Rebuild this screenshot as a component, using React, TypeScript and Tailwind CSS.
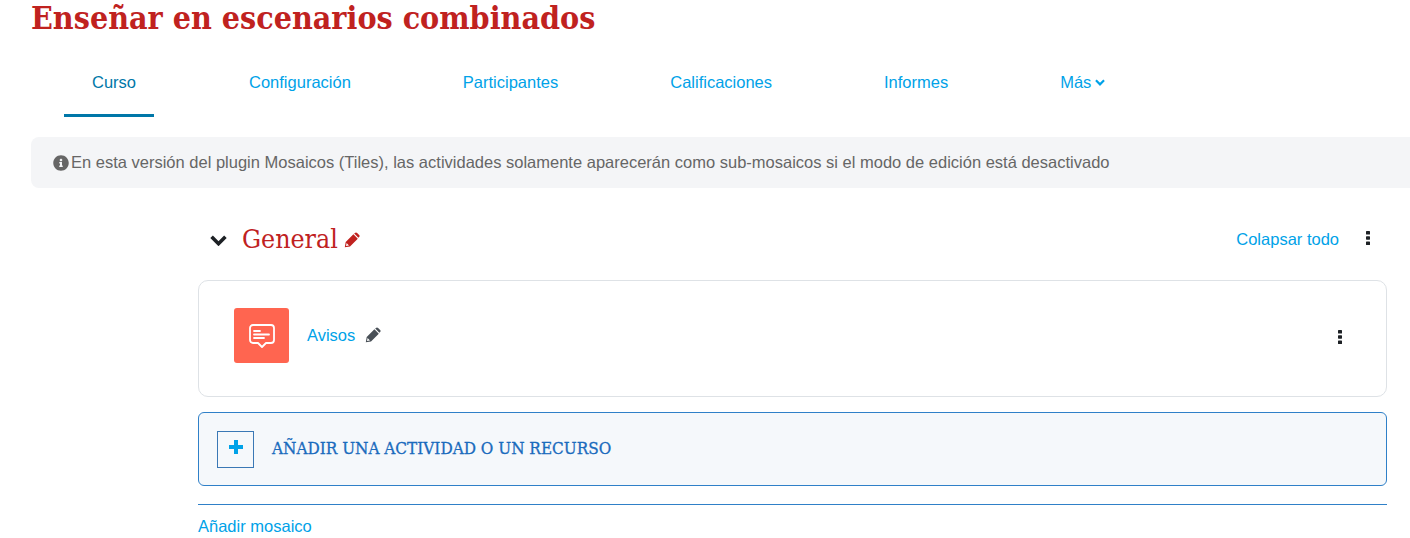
import React from 'react';
import { FaInfoCircle } from 'react-icons/fa';

const slab = "font-['DejaVu_Serif_Condensed','DejaVu_Serif',serif]";

const tabs = ['Configuración', 'Participantes', 'Calificaciones', 'Informes'];

// icono de foro/avisos
const ForumIcon = () => (
  <svg width="28" height="26" viewBox="0 0 28 26" fill="none" stroke="white" strokeWidth="1.8" strokeLinecap="round" strokeLinejoin="round">
    <path d="M5 2h18a3 3 0 0 1 3 3v12a3 3 0 0 1-3 3h-5l-4 4-4-4H5a3 3 0 0 1-3-3V5a3 3 0 0 1 3-3z" />
    <path d="M6 8h6M6 11.5h15M6 15h10" />
  </svg>
);

const Chevron = ({ className }: { className: string }) => (
  <svg className={className} viewBox="0 0 16 10" fill="none" stroke="currentColor" strokeWidth="3.4">
    <path d="M1.5 1.5L8 8l6.5-6.5" />
  </svg>
);

const Pencil = ({ className }: { className: string }) => (
  <svg className={className} viewBox="0 0 16 16" fill="currentColor">
    <path d="M.8 15.2l.9-5.1L9.4 2.3l4.4 4.4-7.8 7.7zM2.6 11l-.6 3 3-.6z" fillRule="evenodd" />
    <path d="M10.2 1.6l.7-.7a1.6 1.6 0 0 1 2.2 0l2 2a1.6 1.6 0 0 1 0 2.2l-.7.7z" />
  </svg>
);

const Dots = ({ className }: { className: string }) => (
  <svg className={className} viewBox="0 0 4 14" fill="currentColor">
    <rect x="0" y="0" width="4" height="3.5" rx="0.6" />
    <rect x="0" y="5.2" width="4" height="3.5" rx="0.6" />
    <rect x="0" y="10.5" width="4" height="3.5" rx="0.6" />
  </svg>
);

export default function App() {
  return (
    <div className="h-[538px] w-[1410px] overflow-hidden bg-white font-['Liberation_Sans',sans-serif] text-[16.5px] text-[#00a2e8]">
      <h1 className={`${slab} ml-[31px] h-[36px] text-[31.9px] font-bold leading-[36px] text-[#c0221f]`}>
        Enseñar en escenarios combinados
      </h1>

      <nav className="mt-[10px] flex h-[71px] items-center pl-[36px]">
        <a className="relative flex h-full items-center pr-[57px] pl-[56px] pt-[2px] text-[#0077a8]">
          Curso
          <span className="absolute bottom-0 left-[28px] h-[3px] w-[90px] bg-[#0077a8]" />
        </a>
        {tabs.map((tab) => (
          <a key={tab} className="px-[56px] pt-[2px]">{tab}</a>
        ))}
        <a className="flex items-center gap-[4px] px-[56px] pt-[2px]">
          Más <Chevron className="h-[7px] w-[10px]" />
        </a>
      </nav>

      <div className="mt-[20px] ml-[31px] -mr-[20px] flex h-[51px] items-center gap-[2px] rounded-[8px] bg-[#f4f5f7] pl-[22px] text-[#666666]">
        <FaInfoCircle className="h-[16px] w-[16px] shrink-0" />
        <span>En esta versión del plugin Mosaicos (Tiles), las actividades solamente aparecerán como sub-mosaicos si el modo de edición está desactivado</span>
      </div>

      <main className="mt-[27px] ml-[198px] w-[1189px]">
        <div className="flex h-[50px] items-center">
          <Chevron className="ml-[12px] h-[11px] w-[17px] text-[#1d2125]" />
          <h2 className={`${slab} ml-[15px] mb-[2px] text-[26.5px] leading-none text-[#c0221f]`}>General</h2>
          <Pencil className="ml-[6px] h-[16px] w-[16px] text-[#c0221f]" />
          <a className="ml-auto mb-[2px]">Colapsar todo</a>
          <Dots className="mr-[17px] mb-[4px] ml-[27px] h-[14px] w-[4px] text-[#1d2125]" />
        </div>

        <section className="mt-[15px] flex h-[117px] items-start rounded-[10px] border border-[#dee2e6] pt-[27px] pl-[35px]">
          <div className="flex h-[55px] w-[55px] items-center justify-center rounded-[3px] bg-[#ff6550]">
            <ForumIcon />
          </div>
          <a className="mt-[15px] ml-[18px]">Avisos</a>
          <Pencil className="mt-[19px] ml-[10px] h-[16px] w-[16px] text-[#495057]" />
          <Dots className="mt-[22px] mr-[44px] ml-auto h-[14px] w-[4px] text-[#1d2125]" />
        </section>

        <button className="mt-[15px] flex h-[74px] w-full items-center rounded-[6px] border border-[#2f80c8] bg-[#f5f8fb] pl-[18px]">
          <span className="flex h-[37px] w-[37px] items-center justify-center border border-[#3a78b5]">
            <svg className="mb-[5px] h-[14px] w-[14px] text-[#00a2e8]" viewBox="0 0 14 14" fill="currentColor">
              <path d="M5 0h4v5h5v4H9v5H5V9H0V5h5z" />
            </svg>
          </span>
          <span className={`${slab} ml-[18px] text-[17px] text-[#1a6bbd] [-webkit-text-stroke:0.3px_#1a6bbd]`}>AÑADIR UNA ACTIVIDAD O UN RECURSO</span>
        </button>

        <div className="mt-[18px] border-t border-[#2f80c8] pt-[9px]">
          <a>Añadir mosaico</a>
        </div>
      </main>
    </div>
  );
}
